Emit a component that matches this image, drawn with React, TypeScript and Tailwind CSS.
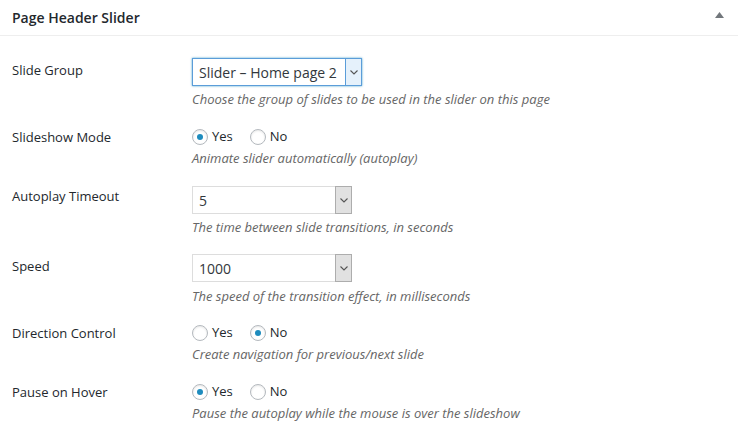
import React from "react";

const font = { fontFamily: '"Open Sans", "Noto Sans", sans-serif' };

function Chevron() {
  return (
    <svg width="8" height="5" viewBox="0 0 8 5" fill="none">
      <polyline points="0.5,0.5 4,4 7.5,0.5" stroke="#555" strokeWidth="1.1" />
    </svg>
  );
}

function Select({ value, width, focused }: { value: string; width: string; focused?: boolean }) {
  return (
    <div
      className={`flex h-[28px] ${width} items-stretch border bg-white ${
        focused ? "border-[#5b9dd9] shadow-[0_0_2px_rgba(30,140,190,0.8)]" : "border-[#ddd]"
      }`}
    >
      <div className="flex flex-1 items-center pl-[6px] text-[14px] text-[#32373c]">{value}</div>
      <div
        className={`flex w-[17px] items-center justify-center border ${
          focused ? "border-[#5b9dd9] bg-[#e5f1fb]" : "border-[#adadad] bg-[#e1e1e1]"
        } -my-px -mr-px`}
      >
        <Chevron />
      </div>
    </div>
  );
}

function Radio({ checked }: { checked?: boolean }) {
  return (
    <span className="flex h-[16px] w-[16px] items-center justify-center rounded-full border border-[#b4b9be] bg-white shadow-[inset_0_1px_2px_rgba(0,0,0,0.1)]">
      {checked && <span className="h-[6px] w-[6px] rounded-full bg-[#1e8cbe]" />}
    </span>
  );
}

function Radios({ yes }: { yes: boolean }) {
  return (
    <div className="flex h-[20px] items-center text-[13px] text-[#23282d]">
      <Radio checked={yes} />
      <span className="ml-[4px]">Yes</span>
      <span className="ml-[17px]">
        <Radio checked={!yes} />
      </span>
      <span className="ml-[4px]">No</span>
    </div>
  );
}

function Desc({ children, mt }: { children: React.ReactNode; mt: string }) {
  return <div className={`${mt} h-[20px] leading-[20px] text-[13px] italic text-[#666]`}>{children}</div>;
}

function Row({
  label,
  mt,
  labelPt,
  children,
}: {
  label: string;
  mt: string;
  labelPt: string;
  children: React.ReactNode;
}) {
  return (
    <div className={`flex ${mt}`}>
      <div className={`w-[192px] shrink-0 pl-[12px] ${labelPt} text-[13px] leading-[20px] text-[#23282d]`}>
        {label}
      </div>
      <div className="flex flex-col">{children}</div>
    </div>
  );
}

export default function App() {
  return (
    <div className="h-[446px] w-[738px] bg-white" style={font}>
      <div className="flex h-[36px] items-center justify-between border-b border-[#eee] pl-[12px] pr-[14px]">
        <span className="text-[14px] font-semibold text-[#23282d]">Page Header Slider</span>
        <svg width="9" height="6" viewBox="0 0 9 6" className="-mt-[6px]">
          <polygon points="0,6 4.5,0 9,6" fill="#72777c" />
        </svg>
      </div>

      <Row label="Slide Group" mt="mt-[22px]" labelPt="pt-[2px]">
        <Select value="Slider – Home page 2" width="w-[170px]" focused />
        <Desc mt="mt-[3px]">Choose the group of slides to be used in the slider on this page</Desc>
      </Row>

      <Row label="Slideshow Mode" mt="mt-[18px]" labelPt="pt-0">
        <Radios yes />
        <Desc mt="mt-[1px]">Animate slider automatically (autoplay)</Desc>
      </Row>

      <Row label="Autoplay Timeout" mt="mt-[18px]" labelPt="pt-0">
        <Select value="5" width="w-[160px]" />
        <Desc mt="mt-[3px]">The time between slide transitions, in seconds</Desc>
      </Row>

      <Row label="Speed" mt="mt-[17px]" labelPt="pt-[2px]">
        <Select value="1000" width="w-[160px]" />
        <Desc mt="mt-[4px]">The speed of the transition effect, in milliseconds</Desc>
      </Row>

      <Row label="Direction Control" mt="mt-[17px]" labelPt="pt-0">
        <Radios yes={false} />
        <Desc mt="mt-[1px]">Create navigation for previous/next slide</Desc>
      </Row>

      <Row label="Pause on Hover" mt="mt-[18px]" labelPt="pt-0">
        <Radios yes />
        <Desc mt="mt-[1px]">Pause the autoplay while the mouse is over the slideshow</Desc>
      </Row>
    </div>
  );
}
